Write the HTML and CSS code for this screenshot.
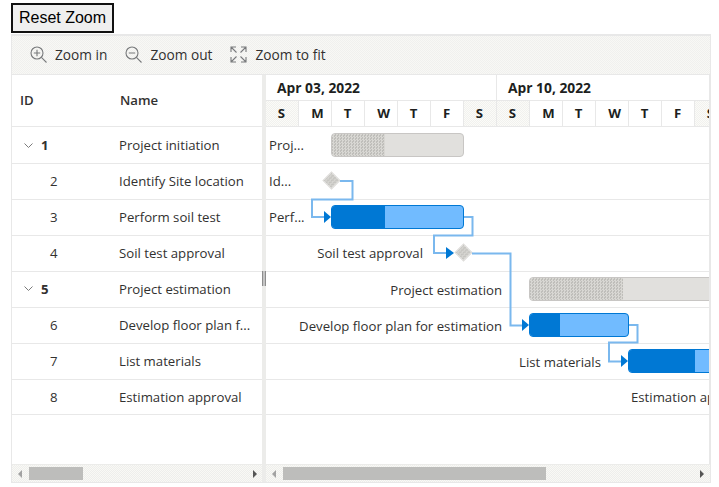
FILE: index.html
```html
<!DOCTYPE html>
<html lang="en">
<head>
<meta charset="utf-8">
<title>Gantt</title>
<link rel="stylesheet" href="styles.css">
</head>
<body>
<button class="reset">Reset Zoom</button>
<div class="gantt">
  <div class="toolbar">
    <div class="tool">
      <svg class="ico" viewBox="0 0 17 17"><circle cx="7" cy="7" r="6"/><path d="M11.400 11.400 16.500 16.500M7 3.800V10.200M3.800 7H10.200"/></svg>
      <span>Zoom in</span>
    </div>
    <div class="tool">
      <svg class="ico" viewBox="0 0 17 17"><circle cx="7" cy="7" r="6"/><path d="M11.400 11.400 16.500 16.500M3.800 7H10.200"/></svg>
      <span>Zoom out</span>
    </div>
    <div class="tool">
      <svg class="ico" viewBox="0 0 17 17"><path d="M1 6V1H6M1 1 6.500 6.500M11 1H16V6M16 1 10.500 6.500M1 11V16H6M1 16 6.500 10.500M16 11V16H11M16 16 10.500 10.500"/></svg>
      <span>Zoom to fit</span>
    </div>
  </div>
  <div class="panes">
    <div class="grid">
      <div class="grid-head"><div class="c-id">ID</div><div class="c-name head-name">Name</div></div>
      <div class="rows">
        <div class="row"><div class="c-id parent"><svg class="chev" viewBox="0 0 9 5"><path d="M.5.5 4.500 4.500 8.500.5"/></svg><b>1</b></div><div class="c-name">Project initiation</div></div>
        <div class="row"><div class="c-id child">2</div><div class="c-name">Identify Site location</div></div>
        <div class="row"><div class="c-id child">3</div><div class="c-name">Perform soil test</div></div>
        <div class="row"><div class="c-id child">4</div><div class="c-name">Soil test approval</div></div>
        <div class="row"><div class="c-id parent"><svg class="chev" viewBox="0 0 9 5"><path d="M.5.5 4.500 4.500 8.500.5"/></svg><b>5</b></div><div class="c-name">Project estimation</div></div>
        <div class="row"><div class="c-id child">6</div><div class="c-name">Develop floor plan f...</div></div>
        <div class="row"><div class="c-id child">7</div><div class="c-name">List materials</div></div>
        <div class="row"><div class="c-id child">8</div><div class="c-name">Estimation approval</div></div>
      </div>
      <div class="scroll">
        <i class="arrow left off"></i><div class="thumb thumb-grid"></div><i class="arrow right"></i>
      </div>
    </div>
    <div class="splitter"><div class="grip"></div></div>
    <div class="chart">
      <div class="tl-head">
        <div class="weeks"><div class="week">Apr 03, 2022</div><div class="week">Apr 10, 2022</div></div>
        <div class="days">
          <div class="day we">S</div><div class="day wide">M</div><div class="day">T</div><div class="day wide">W</div><div class="day">T</div><div class="day">F</div><div class="day we">S</div>
          <div class="day we">S</div><div class="day wide">M</div><div class="day">T</div><div class="day wide">W</div><div class="day">T</div><div class="day">F</div><div class="day we">S</div>
        </div>
      </div>
      <div class="canvas">
        <div class="rows">
          <div class="row">
            <span class="lbl" style="left:3px">Proj...</span>
            <div class="bar sum" style="left:65px;width:133px"><div class="prog" style="width:53px"></div></div>
          </div>
          <div class="row">
            <span class="lbl" style="left:3px">Id...</span>
            <div class="ms" style="left:59px"></div>
          </div>
          <div class="row">
            <span class="lbl" style="left:3px">Perf...</span>
            <div class="bar task" style="left:65px;width:133px"><div class="prog" style="width:53px"></div></div>
          </div>
          <div class="row">
            <span class="lbl" style="right:286px">Soil test approval</span>
            <div class="ms" style="left:191px"></div>
          </div>
          <div class="row">
            <span class="lbl" style="right:207px">Project estimation</span>
            <div class="bar sum" style="left:263px;width:260px"><div class="prog" style="width:93px"></div></div>
          </div>
          <div class="row">
            <span class="lbl" style="right:207px">Develop floor plan for estimation</span>
            <div class="bar task" style="left:263px;width:100px"><div class="prog" style="width:30px"></div></div>
          </div>
          <div class="row">
            <span class="lbl" style="right:108px">List materials</span>
            <div class="bar task" style="left:362px;width:200px"><div class="prog" style="width:66px"></div></div>
          </div>
          <div class="row">
            <span class="lbl" style="left:365px">Estimation approval</span>
          </div>
        </div>
        <svg class="links" viewBox="266 127 444 288">
          <path class="link" d="M340 181H352.500V199.500H312V217H325"/>
          <path class="link" d="M464 217H472.500V235.500H434V253H447"/>
          <path class="link" d="M472 253.500H510.500V325.500H523"/>
          <path class="link" d="M629 325H637.500V342.500H609V361.500H622"/>
          <path class="head" d="M324 211 331 217 324 223Z"/>
          <path class="head" d="M446 247 454 253 446 259Z"/>
          <path class="head" d="M522 319 529 325 522 331Z"/>
          <path class="head" d="M621 355 628 361 621 367Z"/>
        </svg>
      </div>
      <div class="scroll">
        <i class="arrow left off"></i><div class="thumb thumb-chart"></div><i class="arrow right end"></i>
      </div>
    </div>
  </div>
</div>
</body>
</html>
```
FILE: styles.css
```css
* { box-sizing: border-box; }
html, body { margin: 0; background: #fff; }
body {
  width: 719px;
  height: 487px;
  overflow: hidden;
  padding: 3px 0 0 11px;
  font-family: "Open Sans", "Noto Sans", sans-serif;
  font-size: 13.2px;
  color: #323130;
}
.reset {
  display: block;
  width: 103px;
  height: 30px;
  padding: 0;
  border: 2px solid #111;
  background: #efefef;
  color: #000;
  font: 16px "Liberation Sans", sans-serif;
}
.gantt {
  width: 700px;
  height: 449px;
  margin-top: 1px;
  border: 1px solid #e8e8e8;
  display: flex;
  flex-direction: column;
}
.toolbar {
  height: 40px;
  flex: none;
  display: flex;
  align-items: center;
  gap: 18px;
  padding: 0 0 2px 18px;
  border-top: 1px solid #e8e8e8;
  border-bottom: 1px solid #e8e8e8;
  background: repeating-conic-gradient(#f8f8f5 0 25%, #f0f0ee 0 50%) 0 0 / 2px 2px;
  font-size: 13.7px;
}
.tool { display: flex; align-items: center; gap: 8px; }
.ico {
  width: 17px;
  height: 17px;
  fill: none;
  stroke: #77797b;
  stroke-width: 1.1;
  overflow: visible;
}
.panes { flex: 1; display: flex; min-height: 0; }
.grid { width: 250px; flex: none; display: flex; flex-direction: column; }
.splitter {
  width: 4px;
  flex: none;
  background: #ececea;
  position: relative;
}
.grip {
  position: absolute;
  left: 0;
  top: 196px;
  width: 4px;
  height: 15px;
  border-left: 1px solid #8d8d8d;
  border-right: 1px solid #8d8d8d;
  background: #fff;
  box-shadow: inset 1px 0 #c4c4c4, inset -1px 0 #c4c4c4;
}
.chart { width: 444px; flex: none; display: flex; flex-direction: column; min-width: 0; }
.grid-head {
  height: 52px;
  flex: none;
  display: flex;
  align-items: center;
  border-bottom: 1px solid #e8e8e8;
  font-weight: 600;
  padding-bottom: 1px;
}
.rows {
  flex: 1;
  display: grid;
  grid-template-rows: 37px repeat(6, 36px) 35px 1fr;
  align-content: start;
  min-height: 0;
}
.row {
  position: relative;
  display: flex;
  align-items: center;
  border-bottom: 1px solid #e8e8e8;
}
.grid .row:nth-child(n+2):nth-child(-n+7) { padding-bottom: 2px; }
.c-id { width: 107px; flex: none; padding-left: 8px; }
.head-name { padding-left: 1px; }
.c-name { white-space: nowrap; }
.child { padding-left: 38px; }
.parent { display: flex; align-items: center; padding-left: 12px; gap: 8px; }
.parent b { font-weight: 700; }
.chev { width: 9px; height: 5px; fill: none; stroke: #7b7b7b; stroke-width: 1; }
.tl-head { height: 52px; flex: none; border-bottom: 1px solid #e8e8e8; border-right: 1px solid #e8e8e8; overflow: hidden; }
.weeks { display: grid; grid-template-columns: 231px 231px; height: 26px; border-bottom: 1px solid #e8e8e8; }
.week {
  font-size: 13.8px;
  font-weight: 700;
  color: #201f1e;
  padding-left: 11px;
  line-height: 26px;
  border-right: 1px solid #e8e8e8;
  white-space: nowrap;
}
.days { display: grid; grid-template-columns: repeat(14, 33px); height: 25px; }
.day {
  font-weight: 700;
  color: #201f1e;
  text-align: center;
  line-height: 25px;
  padding-right: 1px;
  border-right: 1px solid #e8e8e8;
}
.wide { padding-left: 5px; padding-right: 0; }
.we { background: repeating-conic-gradient(#fbfbf8 0 25%, #f1f1ee 0 50%) 0 0 / 2px 2px; }
.canvas {
  position: relative;
  flex: 1;
  display: flex;
  min-height: 0;
  overflow: hidden;
  border-right: 1px solid #e8e8e8;
}
.canvas .rows { width: 100%; }
.canvas .row:nth-child(n+2):nth-child(-n+4) { padding-bottom: 2px; }
.canvas .row:nth-child(n+5):nth-child(-n+7) { padding-top: 1px; }
.lbl { position: absolute; white-space: nowrap; }
.bar {
  position: absolute;
  top: 5px;
  height: 24px;
  border-radius: 4px;
  border: 1px solid;
  overflow: hidden;
}
.row:first-child .bar { top: 6px; }
.prog { height: 100%; }
.sum { background: #e1e0dd; border-color: #c8c6c4; }
.sum .prog { background: repeating-conic-gradient(#d8d7d3 0 25%, #bfbeba 0 50%) 0 0 / 3px 3px; }
.task { background: #71bbff; border-color: #0078d4; }
.task .prog { background: #0078d4; }
.ms {
  position: absolute;
  top: 10px;
  width: 13px;
  height: 13px;
  background: repeating-conic-gradient(#d6d5d1 0 25%, #c4c3bf 0 50%) 0 0 / 3px 3px;
  border: 1px solid #dcdbd8;
  transform: rotate(45deg);
}
.links {
  position: absolute;
  left: 0;
  top: 0;
  width: 444px;
  height: 288px;
  overflow: hidden;
}
.link { fill: none; stroke: #7ab8ee; stroke-width: 2; }
.head { fill: #0078d4; }
.scroll {
  height: 18px;
  flex: none;
  display: flex;
  align-items: center;
  position: relative;
  background: repeating-conic-gradient(#f9f9f5 0 25%, #eeeeec 0 50%) 0 0 / 2px 2px;
  border-top: 1px solid #ececea;
}
.thumb { height: 13px; background: #bdbdbb; }
.thumb-grid { width: 54px; }
.thumb-chart { width: 263px; }
.arrow {
  width: 0;
  height: 0;
  flex: none;
  border-top: 4px solid transparent;
  border-bottom: 4px solid transparent;
}
.left { border-right: 4px solid #555; margin: 0 7px 0 6px; }
.left.off { border-right-color: #a2a2a2; }
.right { border-left: 4px solid #555; margin-left: auto; margin-right: 5px; }
.right.end { margin-right: 6px; }
```
